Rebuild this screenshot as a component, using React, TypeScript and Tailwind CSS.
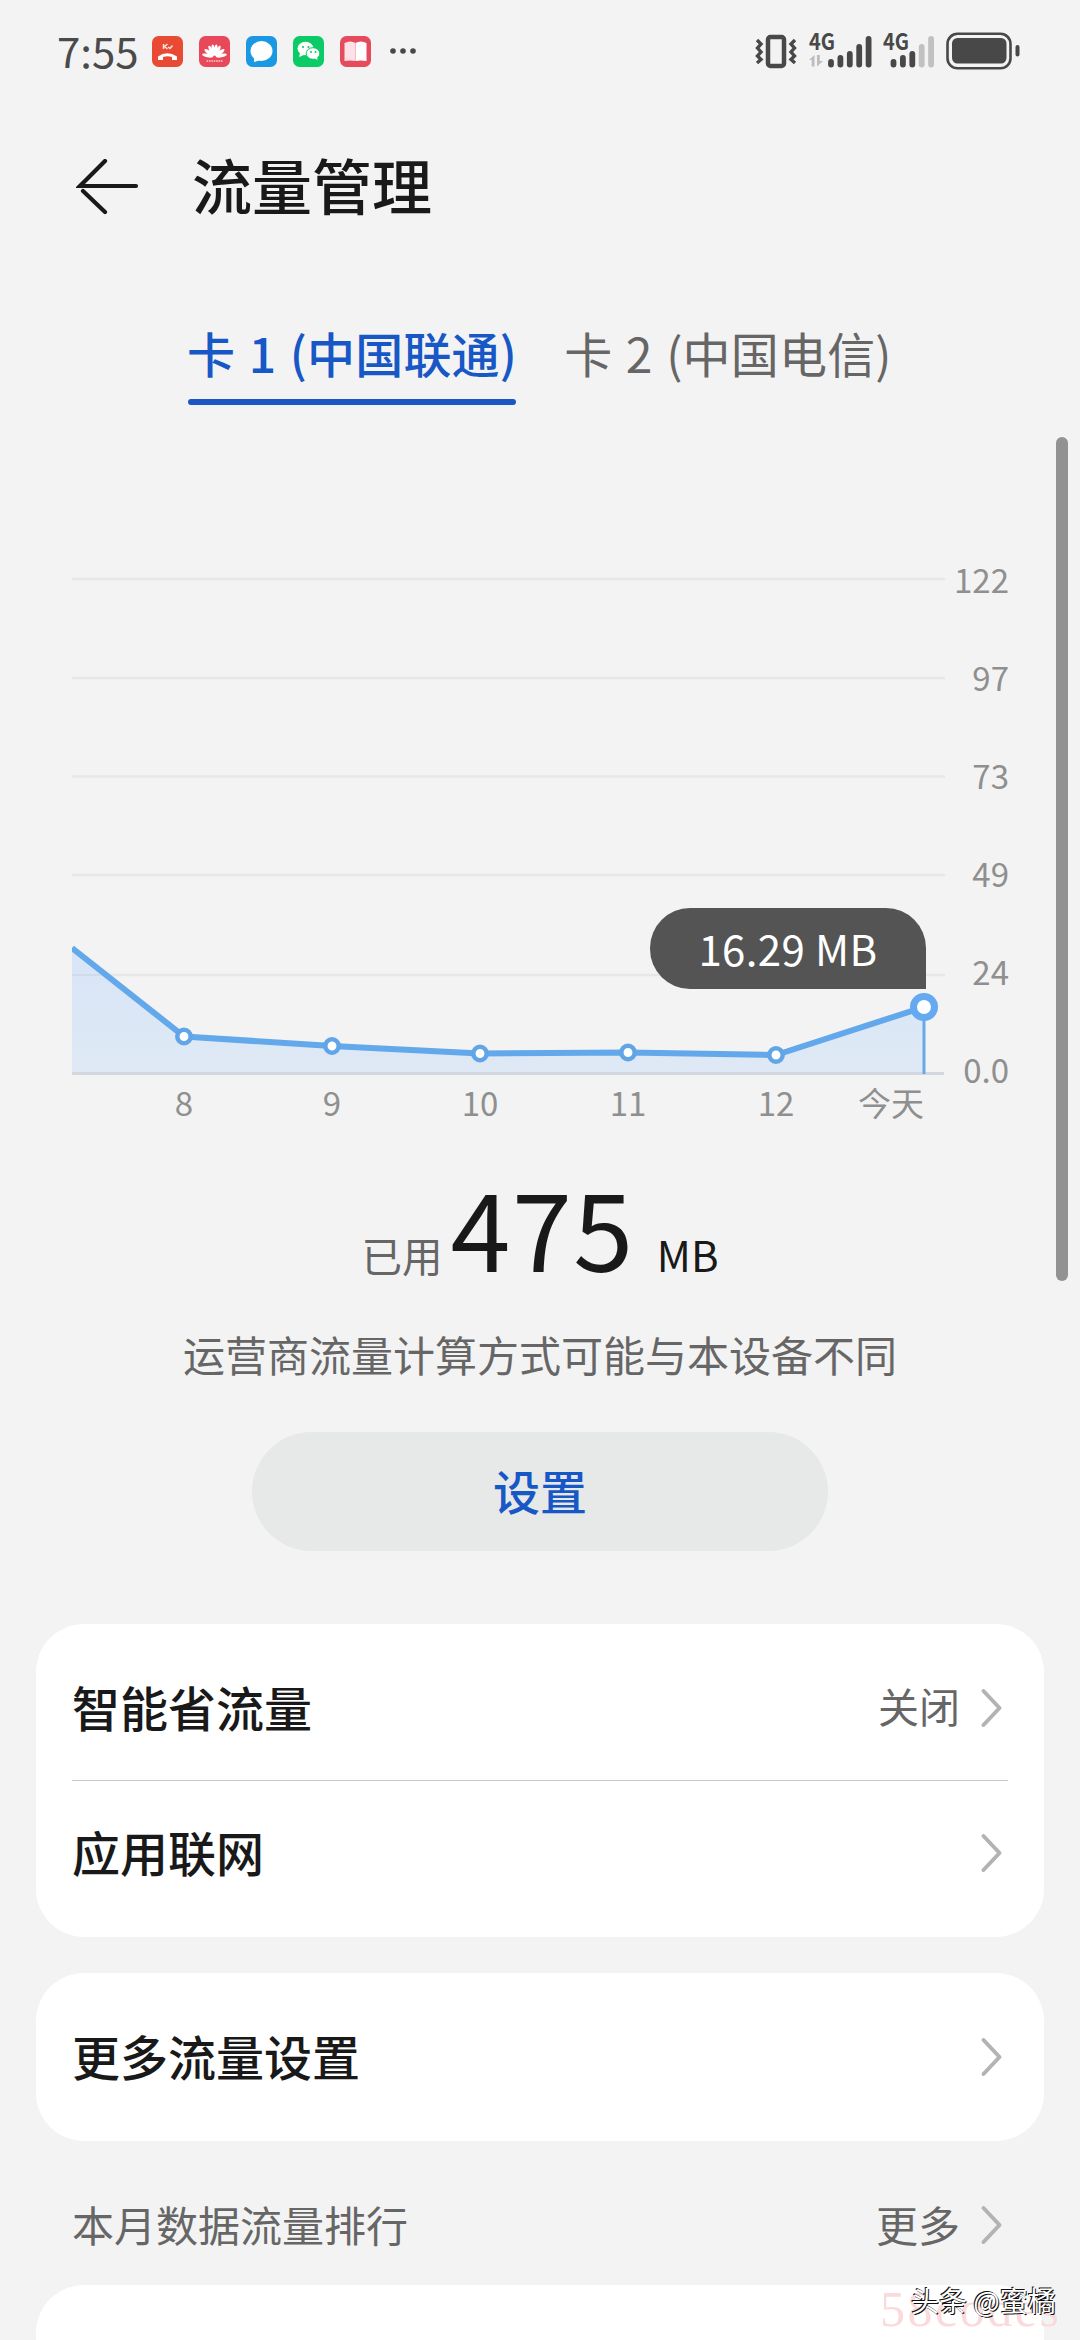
import React from "react";

const bars = [57, 53, 49, 42, 34];

function Signal({ lit, arrows }: { lit: number; arrows?: boolean }) {
  return (
    <svg viewBox="0 0 64 36" className="h-9 w-16 overflow-visible">
      <text x="0" y="16" fontSize="23" fontWeight="700" fill="#484848" textLength="26" lengthAdjust="spacingAndGlyphs" className="font-['Noto_Sans_CJK_SC',sans-serif]">4G</text>
      {arrows && (
        <g fill="#bdbdbd">
          <path d="M0 26l5.500-5v11.500h-2.800V26zM8 21h2.800v6H14l-6 5.500z" />
        </g>
      )}
      {bars.map((t, i) => (
        <path key={i} d={`M${(arrows ? 22 : 10.5) + i * 9.4} ${t - 29}V30.500`} stroke={i < lit ? "#484848" : "#c1c1c1"} strokeWidth="5.800" strokeLinecap="round" />
      ))}
    </svg>
  );
}

function StatusBar() {
  return (
    <header className="flex h-[104px] shrink-0 items-start pt-8">
      <div className="ml-[57px] flex h-10 w-[95px] items-center text-[42px] leading-none text-[#4a4a4a]">
        <span className="pb-1">7:55</span>
      </div>
      <div className="mt-1 flex gap-4">
        <svg viewBox="0 0 31 31" className="size-[31px]">
          <rect width="31" height="31" rx="6.500" fill="#e84a34" />
          <path d="M11.500 8v5M15.500 8l-3 2.500 3 2.500M16 11l2 1.500 2.500-3" stroke="#fbe0d8" strokeWidth="1.500" fill="none" />
          <path d="M6 20.500q9-6.500 19 0v3.500h-5v-3q-4.500-1.500-9 0v3H6z" fill="#fff" />
        </svg>
        <svg viewBox="0 0 31 31" className="size-[31px]">
          <rect width="31" height="31" rx="6.500" fill="#e8495a" />
          <g fill="#fff">
            {[-78, -52, -27, -9, 9, 27, 52, 78].map((a) => (
              <ellipse key={a} cx="15.500" cy="14" rx="1.800" ry="5.600" transform={`rotate(${a} 15.500 21)`} />
            ))}
          </g>
          <path d="M7.500 25h16" stroke="#f6a9b1" strokeWidth="2" strokeDasharray="1.600 .8" />
        </svg>
        <svg viewBox="0 0 31 31" className="size-[31px]">
          <rect width="31" height="31" rx="6.500" fill="#1b98e4" />
          <ellipse cx="15.500" cy="15" rx="11" ry="10" fill="#fff" />
          <path d="M8 20v6l7-2z" fill="#fff" />
        </svg>
        <svg viewBox="0 0 31 31" className="size-[31px]">
          <rect width="31" height="31" rx="6.500" fill="#0acb66" />
          <ellipse cx="12.500" cy="12.500" rx="8" ry="6.800" fill="#fff" />
          <path d="M7 17l-1 4 5-2z" fill="#fff" />
          <ellipse cx="20" cy="17.500" rx="6.800" ry="5.800" fill="#fff" stroke="#0acb66" />
          <path d="M21 22l3.500 2-.5-4z" fill="#fff" />
          <g fill="#0acb66"><circle cx="10" cy="11" r="1.100" /><circle cx="15.500" cy="11" r="1.100" /><circle cx="18" cy="16" r="1" /><circle cx="22.500" cy="16" r="1" /></g>
        </svg>
        <svg viewBox="0 0 31 31" className="size-[31px]">
          <rect width="31" height="31" rx="6.500" fill="#e54a5d" />
          <path d="M4.500 7q6-3 11 0v18q-5-1-11 0z" fill="#fde1e8" />
          <path d="M15.500 7q5-3 11 0v18q-6-1-11 0z" fill="#fff" />
          <path d="M15.500 7v18" stroke="#f7b9c4" />
        </svg>
      </div>
      <svg viewBox="0 0 28 8" className="ml-[18px] mt-[15px] h-2 w-7" fill="#484848">
        <circle cx="4" cy="4" r="2.800" /><circle cx="14" cy="4" r="2.800" /><circle cx="24" cy="4" r="2.800" />
      </svg>
      <svg viewBox="0 0 42 36" className="ml-auto mt-0.5 h-9 w-[42px]" fill="none" stroke="#484848">
        <rect x="13" y="3" width="16" height="29" rx="2.500" strokeWidth="4.500" />
        <path d="M2 6l4 4-3.500 4 3.500 4-3.500 4 3.500 3.500-4 3.500M40 6l-4 4 3.500 4-3.500 4 3.500 4-3.500 3.500 4 3.500" strokeWidth="3.400" />
      </svg>
      <div className="ml-[12px] mt-0.5 flex gap-2.5">
        <Signal lit={5} arrows />
        <Signal lit={3} />
      </div>
      <svg viewBox="0 0 74 38" className="ml-[-1px] mr-[60px] h-[38px] w-[74px]">
        <rect x="1.500" y="1.800" width="63" height="34.500" rx="10" fill="none" stroke="#484848" strokeWidth="2.600" />
        <rect x="6" y="6" width="54.500" height="25.500" rx="5.500" fill="#484848" />
        <rect x="69.500" y="13" width="4" height="11.500" rx="2" fill="#484848" />
      </svg>
    </header>
  );
}

function Chevron() {
  return (
    <svg viewBox="0 0 24 40" className="h-10 w-6" fill="none" stroke="#b3b3b3" strokeWidth="4" strokeLinecap="round" strokeLinejoin="round">
      <path d="M4.500 3L20.500 20 4.500 37" />
    </svg>
  );
}

function Row({ label, value }: { label: string; value?: string }) {
  return (
    <div className="flex h-36 items-center justify-between">
      <span className="pb-[5px] text-[48px] font-medium leading-none text-[#191919]">{label}</span>
      <div className="mr-[5px] flex items-center gap-[19px]">
        <span className="pb-[5px] text-[41px] leading-none text-[#666]">{value}</span>
        <Chevron />
      </div>
    </div>
  );
}

const points = [[0, 508], [112, 596.5], [260, 606], [408, 613.5], [556, 612.5], [704, 615], [852, 567]];
const line = points.map((p) => p.join(",")).join(" ");

function Chart() {
  return (
    <section className="relative flex h-[700px] shrink-0 pl-[72px]">
      <div className="w-[873px]">
        <svg viewBox="0 0 873 640" className="h-[640px] w-[873px]">
          {[139, 238, 336.5, 435, 535].map((y) => (
            <path key={y} d={`M0 ${y}H873`} stroke="#e6e7e7" strokeWidth="2.500" />
          ))}
          <defs>
            <linearGradient id="area" x1="0" y1="0" x2="0" y2="1">
              <stop stopColor="#d8e5f7" /><stop offset="1" stopColor="#dfe9f5" />
            </linearGradient>
          </defs>
          <polygon points={`0,634 ${line} 852,634`} fill="url(#area)" />
          <path d="M0 535H30" stroke="#d0dbea" strokeWidth="2" />
          <path d="M0 633.500H872" stroke="#d3d8de" strokeWidth="3" />
          <path d="M852 567V634" stroke="#66a9e9" strokeWidth="3" />
          <polyline points={line} fill="none" stroke="#62a8ea" strokeWidth="6" strokeLinejoin="round" />
          {points.slice(1).map(([x, y], i) => (
            <circle key={x} cx={x} cy={y} r={i === 5 ? 10.5 : 6.7} fill="#fff" stroke={i === 5 ? "#64a9f2" : "#62a5e6"} strokeWidth={i === 5 ? 7 : 4.5} />
          ))}
        </svg>
        <div className="flex h-11 items-center text-[33px] leading-none text-[#8f8f8f]">
          <span className="ml-[82px] w-[60px] text-center">8</span>
          {["9", "10", "11", "12"].map((d) => (
            <span key={d} className="ml-[88px] w-[60px] text-center">{d}</span>
          ))}
          <span className="ml-[52px]">今天</span>
        </div>
      </div>
      <div className="mt-[90px] flex w-[64px] flex-col text-right text-[33px] leading-none text-[#8f8f8f]">
        {["122", "97", "73", "49", "24", "0.0"].map((v) => (
          <span key={v} className="flex h-[98px] items-center justify-end">{v}</span>
        ))}
      </div>
      <div className="absolute left-[650px] top-[468px] flex h-[81px] w-[276px] items-center justify-center rounded-[40px] rounded-br-none bg-[#545454] pb-0.5 text-[42px] leading-none tracking-[0.4px] text-white">16.29 MB</div>
    </section>
  );
}

export default function App() {
  return (
    <div className="relative flex h-[2340px] w-[1080px] flex-col overflow-hidden bg-[#f3f3f3] font-['Noto_Sans_CJK_SC','Noto_Sans',sans-serif]">
      <StatusBar />
      <div className="flex h-[166px] shrink-0 items-center pl-[76px]">
        <svg viewBox="0 0 64 56" className="h-14 w-16" fill="none" stroke="#191919" strokeWidth="4.200" strokeLinecap="round">
          <path d="M60 27H4L29 2M7 32L29 53" />
        </svg>
        <h1 className="ml-[52px] pb-1.5 text-[60px] font-medium leading-none text-[#191919]">流量管理</h1>
      </div>
      <nav className="flex h-[170px] shrink-0 justify-center gap-12 pt-[42px] text-[48px] leading-[80px] tracking-[0.2px] [word-spacing:2.5px]">
        <div className="flex w-[328px] flex-col items-center font-medium text-[#1757c6]">
          <span className="h-[87px] whitespace-nowrap">卡 1 (中国联通)</span>
          <span className="h-1.5 w-full rounded-full bg-[#1c56c2]" />
        </div>
        <div className="w-[328px] whitespace-nowrap text-center text-[#666]">卡 2 (中国电信)</div>
      </nav>
      <Chart />
      <div className="mt-[9px] flex h-[152px] shrink-0 items-baseline justify-center leading-[152px] text-[#191919]">
        <span className="text-[40.500px] text-[#666]">已用</span>
        <span className="ml-2 text-[108px] tracking-[1.500px]">475</span>
        <span className="ml-[22px] text-[42px]">MB</span>
      </div>
      <p className="mt-[31px] h-[44px] shrink-0 text-center text-[42px] leading-[44px] text-[#666]">运营商流量计算方式可能与本设备不同</p>
      <button className="mx-auto mt-[56px] h-[119px] w-[576px] shrink-0 rounded-full bg-[#e7e8e8] pb-1 text-[47px] font-medium leading-none text-[#1757c6]">设置</button>
      <main className="mx-9 mt-[73px] flex flex-col">
        <div className="rounded-[48px] bg-white px-9 py-3">
          <Row label="智能省流量" value="关闭" />
          <div className="h-px bg-[#c9c9c9]" />
          <Row label="应用联网" />
        </div>
        <div className="mt-9 rounded-[48px] bg-white px-9 py-3">
          <Row label="更多流量设置" />
        </div>
        <div className="flex h-36 items-center justify-between pl-9 pr-[41px] pt-6 text-[42px] leading-none text-[#666]">
          <span className="pb-0.5">本月数据流量排行</span>
          <div className="flex items-center gap-[19px]"><span className="pb-0.5">更多</span><Chevron /></div>
        </div>
        <div className="h-24 rounded-t-[48px] bg-white" />
      </main>
      <div className="absolute left-[1056px] top-[437px] h-[844px] w-3 rounded-full bg-[#929292]" />
      <div className="absolute left-[880px] top-[2282px] whitespace-nowrap text-[50px] leading-[54px] tracking-[2.500px] text-[#fbdadc] font-['Liberation_Serif',serif]">58codes</div>
      <div className="absolute left-[911px] top-[2282px] whitespace-nowrap text-[28px] leading-[36px] text-white [text-shadow:-1px_-1px_0_#111,1px_1px_0_#111]">头条 @蜜橘</div>
    </div>
  );
}
